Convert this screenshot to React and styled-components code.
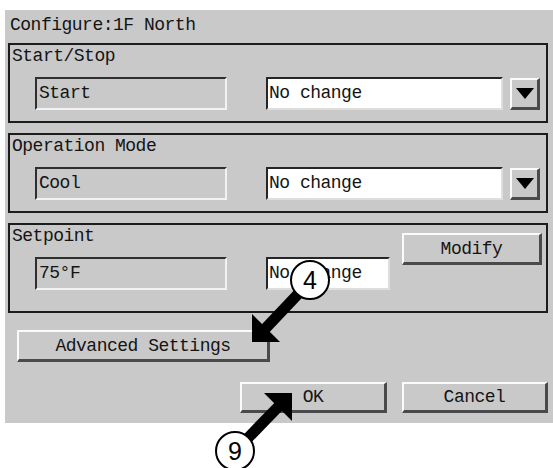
import React from 'react';
import styled, { createGlobalStyle } from 'styled-components';

const GlobalStyle = createGlobalStyle`
  html, body {
    margin: 0;
    padding: 0;
    background: #ffffff;
  }
  body {
    font-family: "Liberation Mono", "DejaVu Sans Mono", monospace;
    color: #141414;
  }
`;

const Page = styled.div`
  position: relative;
  width: 553px;
  height: 468px;
  padding: 10px 0 0 5px;
  box-sizing: border-box;
`;

const Dialog = styled.div`
  width: 548px;
  height: 413px;
  box-sizing: border-box;
  background: #c9c9c9;
  padding: 0 5px 0 3px;
  display: flex;
  flex-direction: column;
  font-size: 18px;
  letter-spacing: -0.5px;
`;

const Title = styled.div`
  height: 33px;
  box-sizing: border-box;
  padding: 4px 0 0 2px;
  line-height: 22px;
`;

const Group = styled.section`
  border: 2px solid #1c1c1c;
  padding: 0 0 ${p => (p.$tall ? 21 : 11)}px 2px;
  margin-bottom: 10px;
  display: flex;
`;

const GroupMain = styled.div`
  flex: 1;
  display: flex;
  flex-direction: column;
`;

const GroupLabel = styled.div`
  height: 22px;
  line-height: 22px;
`;

const Row = styled.div`
  display: flex;
  align-items: center;
  margin-top: 10px;
  padding-left: 23px;
`;

const ReadField = styled.div`
  width: 192px;
  height: 33px;
  box-sizing: border-box;
  border-style: solid;
  border-width: 2px;
  border-color: #2e2e2e #f2f2f2 #f2f2f2 #2e2e2e;
  padding-left: 2px;
  line-height: 29px;
`;

const Entry = styled.div`
  width: ${p => p.$width}px;
  height: 33px;
  margin-left: 39px;
  box-sizing: border-box;
  background: #ffffff;
  border-style: solid;
  border-width: 2px;
  border-color: #262626 #dedede #dedede #262626;
  padding-left: 1px;
  line-height: 29px;
  white-space: nowrap;
`;

const Button = styled.div`
  width: ${p => p.$width}px;
  height: ${p => p.$height || 32}px;
  box-sizing: border-box;
  border-style: solid;
  border-width: 2px 3px 3px 2px;
  border-color: #fbfbfb #4a4a4a #4a4a4a #fbfbfb;
  display: flex;
  align-items: center;
  justify-content: center;
  line-height: 1;
`;

const DropButton = styled(Button)`
  margin-left: 7px;
`;

const SideColumn = styled.div`
  padding: 8px 4px 0 0;
`;

const AdvancedButton = styled(Button)`
  align-self: flex-start;
  margin: 7px 0 0 9px;
`;

const Footer = styled.div`
  margin-top: auto;
  padding-bottom: 10px;
  display: flex;
  justify-content: flex-end;
  gap: 15px;
`;

const Overlay = styled.svg`
  position: absolute;
  left: 0;
  top: 0;
  pointer-events: none;
`;

const Callout = styled.text`
  font-family: "Liberation Sans", Arial, sans-serif;
  font-size: 25px;
`;

function Triangle() {
  return (
    <svg width="18" height="11" viewBox="0 0 18 11">
      <polygon points="0,0 18,0 9,11" fill="#000" />
    </svg>
  );
}

function Marker({ cx, cy, label, shaft, head }) {
  return (
    <g>
      <polygon points={head} fill="#000" />
      <line x1={shaft[0]} y1={shaft[1]} x2={shaft[2]} y2={shaft[3]} stroke="#000" strokeWidth="11" />
      <circle cx={cx} cy={cy} r="19" fill="#fff" stroke="#000" strokeWidth="2" />
      <Callout x={cx} y={cy + 9} textAnchor="middle">{label}</Callout>
    </g>
  );
}

export default function App() {
  return (
    <Page>
      <GlobalStyle />
      <Dialog>
        <Title>Configure:1F North</Title>

        <Group>
          <GroupMain>
            <GroupLabel>Start/Stop</GroupLabel>
            <Row>
              <ReadField>Start</ReadField>
              <Entry $width={237}>No change</Entry>
              <DropButton $width={30}><Triangle /></DropButton>
            </Row>
          </GroupMain>
        </Group>

        <Group>
          <GroupMain>
            <GroupLabel>Operation Mode</GroupLabel>
            <Row>
              <ReadField>Cool</ReadField>
              <Entry $width={237}>No change</Entry>
              <DropButton $width={30}><Triangle /></DropButton>
            </Row>
          </GroupMain>
        </Group>

        <Group $tall>
          <GroupMain>
            <GroupLabel>Setpoint</GroupLabel>
            <Row>
              <ReadField>75°F</ReadField>
              <Entry $width={124}>No change</Entry>
            </Row>
          </GroupMain>
          <SideColumn>
            <Button $width={140}>Modify</Button>
          </SideColumn>
        </Group>

        <AdvancedButton $width={253}>Advanced Settings</AdvancedButton>

        <Footer>
          <Button $width={147} $height={31}>OK</Button>
          <Button $width={146} $height={31}>Cancel</Button>
        </Footer>
      </Dialog>

      <Overlay width="553" height="468" viewBox="0 0 553 468">
        <Marker
          cx={310}
          cy={280}
          label="4"
          head="252,342 252,314 280,342"
          shaft={[264, 330, 300, 292]}
        />
        <Marker
          cx={235}
          cy={451}
          label="9"
          head="292,393 264,393 292,421"
          shaft={[280, 405, 246, 440]}
        />
      </Overlay>
    </Page>
  );
}
